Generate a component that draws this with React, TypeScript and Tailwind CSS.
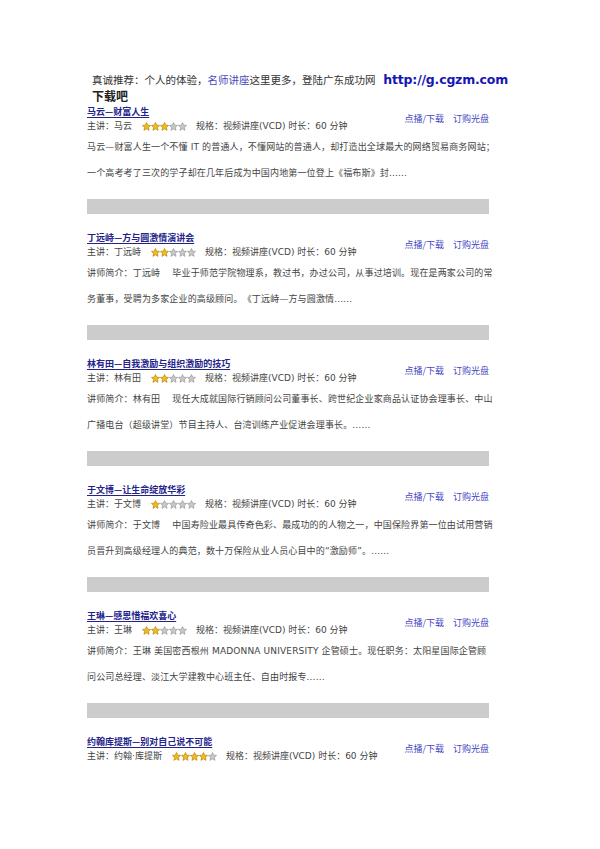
import React from "react";

type Course = {
  title: string;
  speaker: string;
  stars: number;
  desc: string[];
};

const courses: Course[] = [
  {
    title: "马云—财富人生",
    speaker: "马云",
    stars: 3,
    desc: [
      "马云—财富人生一个不懂 IT 的普通人，不懂网站的普通人，却打造出全球最大的网络贸易商务网站；",
      "一个高考考了三次的学子却在几年后成为中国内地第一位登上《福布斯》封......",
    ],
  },
  {
    title: "丁远峙—方与圆激情演讲会",
    speaker: "丁远峙",
    stars: 2,
    desc: [
      "讲师简介：丁远峙　 毕业于师范学院物理系，教过书，办过公司，从事过培训。现在是两家公司的常",
      "务董事，受聘为多家企业的高级顾问。　《丁远峙—方与圆激情......",
    ],
  },
  {
    title: "林有田—自我激励与组织激励的技巧",
    speaker: "林有田",
    stars: 2,
    desc: [
      "讲师简介：林有田　 现任大成就国际行销顾问公司董事长、跨世纪企业家商品认证协会理事长、中山",
      "广播电台（超级讲堂）节目主持人、台湾训练产业促进会理事长。......",
    ],
  },
  {
    title: "于文博—让生命绽放华彩",
    speaker: "于文博",
    stars: 1,
    desc: [
      "讲师简介：于文博　 中国寿险业最具传奇色彩、最成功的的人物之一，中国保险界第一位由试用营销",
      "员晋升到高级经理人的典范，数十万保险从业人员心目中的“激励师”。......",
    ],
  },
  {
    title: "王琳—感恩惜福欢喜心",
    speaker: "王琳",
    stars: 2,
    desc: [
      "讲师简介：王琳 美国密西根州 MADONNA UNIVERSITY 企管硕士。现任职务：太阳星国际企管顾",
      "问公司总经理、淡江大学建教中心班主任、自由时报专......",
    ],
  },
  {
    title: "约翰库提斯—别对自己说不可能",
    speaker: "约翰·库提斯",
    stars: 4,
    desc: [],
  },
];

const Star = ({ on }: { on: boolean }) => (
  <svg width="9" height="9" viewBox="0 0 10 10">
    <polygon
      points="5,0.6 6.3,3.5 9.5,3.8 7.1,6 7.8,9.3 5,7.6 2.2,9.3 2.9,6 0.5,3.8 3.7,3.5"
      fill={on ? "#f2bc1b" : "#c8c8c8"}
      stroke={on ? "#b8860b" : "#9a9a9a"}
      strokeWidth="0.8"
      strokeLinejoin="round"
    />
  </svg>
);

const Section = ({ course, last }: { course: Course; last: boolean }) => (
  <div className="flex flex-col">
    <div className="flex items-center justify-between">
      <div className="flex flex-col">
        <a className="h-[15px] leading-[15px] text-[9px] font-bold text-[#23238a] underline underline-offset-2 font-['Noto_Sans_CJK_SC',sans-serif]">
          {course.title}
        </a>
        <div className="h-[15px] flex items-center text-[9px] text-[#444] font-['DejaVu_Sans','Noto_Sans_CJK_SC',sans-serif] whitespace-nowrap">
          <span>主讲：{course.speaker}</span>
          <span className="flex gap-0 ml-[10px] mr-[9px]">
            {[0, 1, 2, 3, 4].map((i) => (
              <Star key={i} on={i < course.stars} />
            ))}
          </span>
          <span>规格：视频讲座(VCD) 时长：60 分钟</span>
        </div>
      </div>
      <div className="flex gap-[9px] text-[9px] text-[#4646c4] font-['Noto_Sans_CJK_SC',sans-serif] whitespace-nowrap">
        <span>点播/下载</span>
        <span>订购光盘</span>
      </div>
    </div>
    {course.desc.length > 0 && (
      <div className="flex flex-col text-[9px] text-[#444] tracking-[0.15px] font-['DejaVu_Sans','Noto_Sans_CJK_SC',sans-serif]">
        {course.desc.map((line, i) => (
          <p key={i} className="h-[26px] leading-[26px] whitespace-nowrap">
            {line}
          </p>
        ))}
      </div>
    )}
    {!last && <div className="mt-[13px] mb-[16px] h-[15px] bg-[#cccccc]" />}
  </div>
);

export default function App() {
  return (
    <div className="w-[600px] h-[849px] bg-white pt-[72px] pl-[87px]">
      <div className="w-[402px] flex flex-col">
        <div className="pl-[5px] flex flex-col">
          <div className="h-[16px] flex items-center justify-between w-[416px] whitespace-nowrap">
            <span className="text-[10.5px] text-[#333] font-['Noto_Sans_CJK_SC',sans-serif]">
              真诚推荐：个人的体验，<span className="text-[#4848c0]">名师讲座</span>这里更多，登陆广东成功网
            </span>
            <span className="text-[12.5px] font-bold text-[#1616b4] font-['DejaVu_Sans',sans-serif] tracking-[-0.2px]">
              http://g.cgzm.com
            </span>
          </div>
          <div className="h-[16px] leading-[16px] text-[12px] font-bold text-[#222] font-['Noto_Sans_CJK_SC',sans-serif]">
            下载吧
          </div>
        </div>
        {courses.map((c, i) => (
          <Section key={i} course={c} last={i === courses.length - 1} />
        ))}
      </div>
    </div>
  );
}
